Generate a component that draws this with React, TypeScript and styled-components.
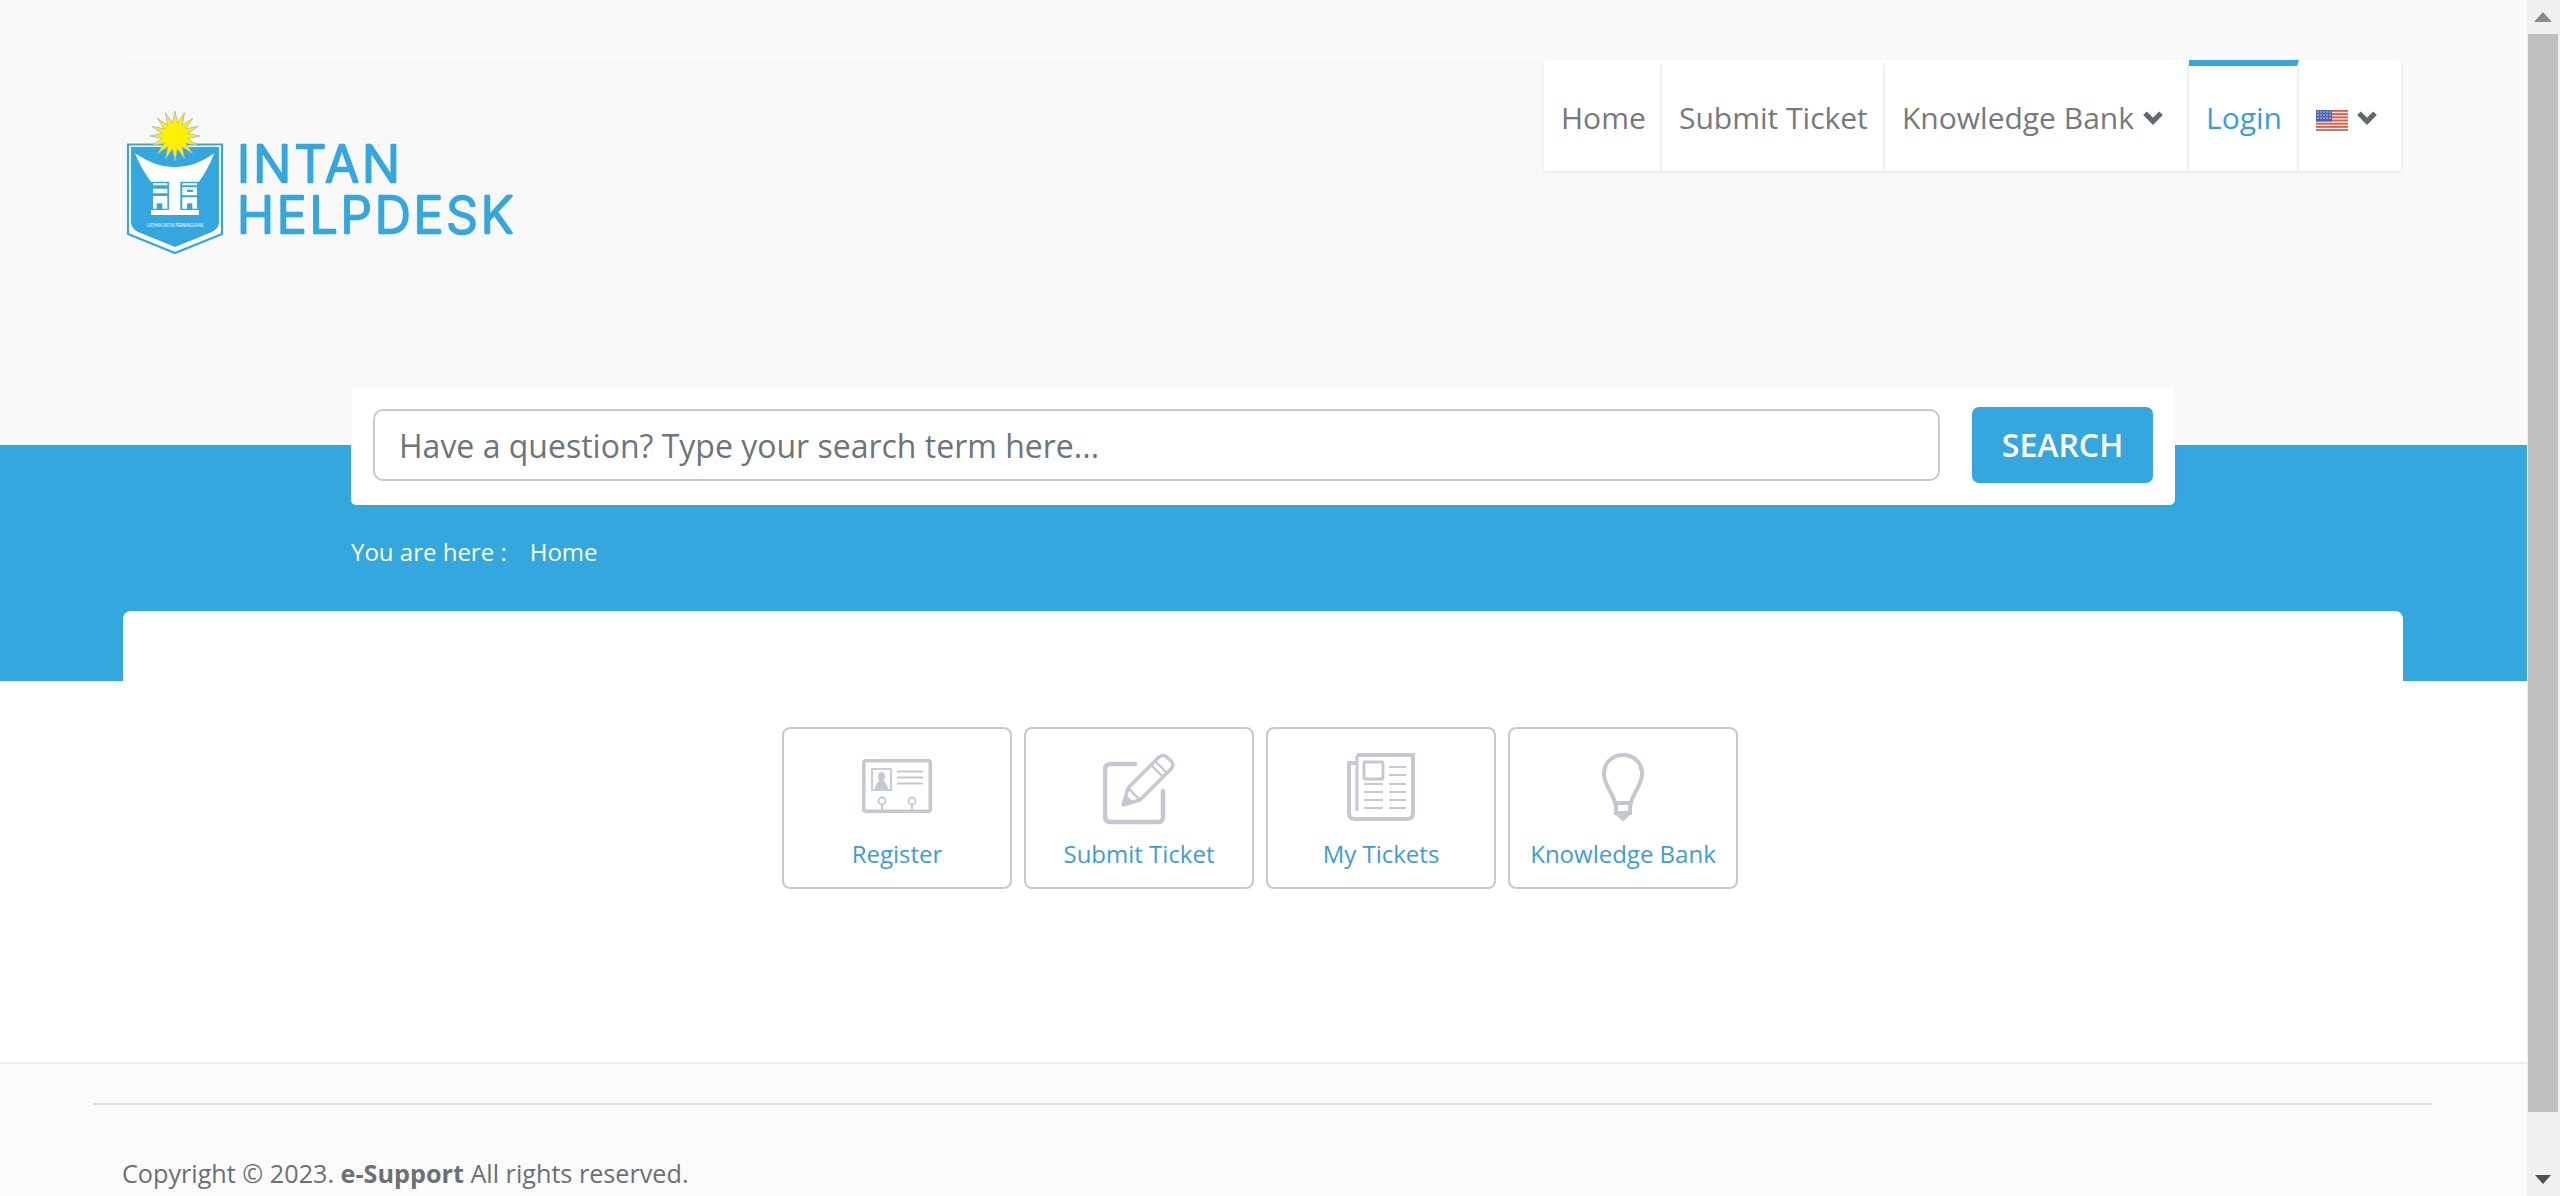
import React from "react";
import styled, { createGlobalStyle } from "styled-components";

const Global = createGlobalStyle`
  html, body { margin: 0; padding: 0; height: 1196px; overflow: hidden; background: #fff; }
  * { box-sizing: border-box; }
  body { font-family: "Open Sans", "Liberation Sans", sans-serif; }
`;

const Shell = styled.div`
  display: flex;
  width: 2560px;
  height: 1196px;
  overflow: hidden;
`;
const Page = styled.div`
  width: 2527px;
  height: 1196px;
  display: flex;
  flex-direction: column;
  overflow: hidden;
`;
const Scrollbar = styled.div`
  width: 33px;
  height: 1196px;
  background: #f0f0f0;
  display: flex;
  flex-direction: column;
  align-items: flex-start;
`;
const ArrowBox = styled.div`
  height: 34px;
  width: 30px;
  margin-left: 1px;
  display: flex;
  align-items: center;
  justify-content: center;
  flex: none;
`;
const Thumb = styled.div`
  width: 30px;
  margin-left: 1px;
  height: 1078px;
  background: #bfbfbf;
`;
const Spacer = styled.div`
  flex: 1;
`;

const HeaderBand = styled.header`
  height: 445px;
  background: #fafafa;
  padding: 60px 122px 0 122px;
  flex: none;
`;
const HeaderInner = styled.div`
  height: 330px;
  background: #f8f8f8;
  display: flex;
  justify-content: space-between;
  align-items: flex-start;
  padding-right: 4px;
`;
const LogoMark = styled.svg`
  display: block;
  margin-top: 45px;
  flex: none;
`;
const Nav = styled.nav`
  display: flex;
  height: 111px;
  background: #fff;
  box-shadow: 0 1px 3px rgba(0, 0, 0, 0.08);
`;
const NavItem = styled.a<{ $active?: boolean; $w: number }>`
  width: ${(p) => p.$w}px;
  display: flex;
  align-items: center;
  gap: 8px;
  padding: 0 0 2px 17px;
  font-size: 30px;
  font-weight: 400;
  color: ${(p) => (p.$active ? "#35a0d8" : "#77787a")};
  border-right: 2px solid #eeeeee;
  border-top: 6px solid ${(p) => (p.$active ? "#35a7df" : "#fff")};
  white-space: nowrap;
  &:last-child { border-right: 0; }
`;
const Chevron = styled.svg`
  display: block;
  flex: none;
`;
const FlagMark = styled.svg`
  display: block;
  flex: none;
  margin-top: 6px;
`;

const BlueBand = styled.section`
  height: 236px;
  background: #35a7df;
  flex: none;
  padding: 0 124px 0 123px;
  display: flex;
  flex-direction: column;
`;
const SearchPanel = styled.div`
  width: 1824px;
  height: 118px;
  margin: -58px 0 0 228px;
  background: #fff;
  border-radius: 5px;
  display: flex;
  align-items: center;
  padding: 0 22px 2px;
  gap: 32px;
  box-shadow: 0 0 3px rgba(0, 0, 0, 0.04);
  flex: none;
`;
const SearchInput = styled.div`
  width: 1567px;
  height: 72px;
  border: 2px solid #c9c9c9;
  border-radius: 10px;
  display: flex;
  align-items: center;
  padding: 0 24px;
  font-size: 32px;
  color: #6c757d;
  white-space: nowrap;
`;
const SearchButton = styled.button`
  width: 181px;
  height: 76px;
  border: 0;
  border-radius: 7px;
  background: #35a7df;
  color: #fff;
  font-family: inherit;
  font-weight: 600;
  font-size: 32px;
  padding: 0 0 2px;
`;
const Crumbs = styled.div`
  margin: 30px 0 0 228px;
  display: flex;
  gap: 23px;
  color: #fdfdf0;
  font-size: 24px;
  line-height: 34px;
`;
const CardTop = styled.div`
  margin-top: auto;
  height: 70px;
  background: #fff;
  border-radius: 8px 8px 0 0;
  flex: none;
`;

const Main = styled.main`
  height: 381px;
  background: #fff;
  flex: none;
  padding: 46px 0 0 782px;
  display: flex;
  gap: 12px;
  align-items: flex-start;
`;
const Tile = styled.a`
  width: 230px;
  height: 162px;
  border: 2px solid #c9c9c9;
  border-radius: 8px;
  display: flex;
  flex-direction: column;
  align-items: center;
  background: #fff;
`;
const IconSlot = styled.div`
  height: 108px;
  padding-top: 24px;
  display: flex;
  align-items: flex-start;
  justify-content: center;
  flex: none;
`;
const TileLabel = styled.span`
  font-size: 24px;
  line-height: 34px;
  color: #3d9dd6;
  white-space: nowrap;
`;

const Footer = styled.footer`
  flex: 1;
  background: #fbfbfb;
  border-top: 2px solid #eeeeee;
  padding-top: 39px;
`;
const FooterRule = styled.hr`
  margin: 0 95px 0 93px;
  border: 0;
  height: 2px;
  background: #dedede;
`;
const Copyright = styled.p`
  margin: 51px 0 0 122px;
  font-size: 25.2px;
  line-height: 34px;
  color: #6b7074;
  white-space: nowrap;
  b { font-weight: 700; }
`;

const ChevronDown = () => (
  <Chevron width={22} height={15} viewBox="0 0 20 14" fill="none">
    <path d="M2.500 3 L10 10.500 L17.500 3" stroke="#5f6870" strokeWidth="4.800" />
  </Chevron>
);

const Flag = () => (
  <FlagMark width="32" height="21" viewBox="0 0 32 21">
    <rect width="32" height="21" fill="#f7e4de" />
    {[0, 3.200, 6.400, 9.600, 12.800, 16, 19.200].map((y) => (
      <rect key={y} y={y} width="32" height="1.800" fill="#db5f4c" />
    ))}
    <rect width="16" height="11.500" fill="#4d62b4" />
    {[2, 5, 8].map((y) =>
      [2, 5, 8, 11, 14].map((x) => <circle key={`${x}-${y}`} cx={x} cy={y} r="0.800" fill="#cfd6ee" />)
    )}
    <rect y="20" width="32" height="1" fill="#a97a70" />
  </FlagMark>
);

const sun = (() => {
  const cx = 53, cy = 31, n = 16;
  const pts: string[] = [];
  for (let i = 0; i < n * 2; i++) {
    const r = i % 2 === 0 ? 25 : 13;
    const a = (Math.PI * i) / n - Math.PI / 2;
    pts.push(`${(cx + r * Math.cos(a)).toFixed(1)},${(cy + r * Math.sin(a)).toFixed(1)}`);
  }
  return pts.join(" ");
})();

const Logo = () => (
  <LogoMark width="410" height="160" viewBox="0 0 410 160" fill="none">
    <path d="M6 39.500 H100 V129 L53 148 L6 129 Z" fill="#fff" stroke="#35a7df" strokeWidth="2.200" />
    <path d="M9 42 H97 V118 Q96 124 90 127 L53 142 L16 127 Q10 124 9 118 Z" fill="#35a7df" />
    <g transform="translate(3 45) scale(0.3333)">
      <path d="M30 10 Q90 52 150 52 Q210 52 268 10 Q248 60 222 95 V195 H78 V95 Q50 60 30 10 Z" fill="#fff" />
      <path d="M78 95 H132 V180 H78 Z M166 95 H222 V180 H166 Z" fill="#35a7df" />
      <path d="M84 100 H127 V106 H84 Z M84 116 H127 V130 H84 Z M84 138 H127 V176 H112 V160 H95 V176 H84 Z" fill="#fff" />
      <path d="M172 100 H216 V106 H172 Z M172 112 H216 V136 H172 Z M172 142 H216 V176 H202 V160 H186 V176 H172 Z" fill="#fff" />
      <rect x="186" y="119" width="18" height="7" fill="#35a7df" />
    </g>
    <text x="53" y="122" textAnchor="middle" textLength="56" lengthAdjust="spacingAndGlyphs" fontFamily="'Liberation Sans', sans-serif" fontSize="5" fill="#fff">LATIHAN UNTUK PEMBANGUNAN</text>
    <polygon points={sun} fill="#fff000" stroke="#9db4cf" strokeWidth="0.800" />
    <text fontFamily="Inter, Lato, sans-serif" fontSize="50" fontWeight="300" fill="#35a7df" stroke="#35a7df" strokeWidth="2.400" strokeLinejoin="round">
      <tspan x="115" y="76.800" textLength="163" lengthAdjust="spacing">INTAN</tspan>
      <tspan x="115" y="127.800" textLength="276" lengthAdjust="spacing">HELPDESK</tspan>
    </text>
  </LogoMark>
);

const stroke = "#c3c8d1";

const IdCardIcon = () => (
  <svg width="70" height="54" viewBox="0 0 70 54" fill="none" stroke={stroke} style={{ marginTop: 6 }}>
    <rect x="1.750" y="1.750" width="66.500" height="50.500" rx="2" strokeWidth="3.500" />
    <rect x="10" y="10" width="19" height="21" strokeWidth="1.800" />
    <ellipse cx="19.500" cy="17.500" rx="3.600" ry="4.600" fill={stroke} stroke="none" />
    <path d="M13 30 C13.500 25 16 24 17.500 21 H21.500 C23 24 25.500 25 26 30 Z" fill={stroke} stroke="none" />
    <path d="M35 12.500 H61 M35 18.500 H61 M35 24.500 H61" strokeWidth="2.200" />
    <circle cx="20" cy="42" r="3.500" strokeWidth="1.800" />
    <circle cx="50" cy="42" r="3.500" strokeWidth="1.800" />
    <path d="M20 46 V52 M50 46 V52" strokeWidth="1.800" />
  </svg>
);
const PencilIcon = () => (
  <svg width="72" height="72" viewBox="0 0 72 72" fill="none" stroke={stroke}>
    <path d="M32 11 H8 Q2 11 2 17 V64 Q2 69 8 69 H55 Q60 69 60 64 V38" strokeWidth="4.500" strokeLinecap="round" />
    <path d="M20 52 L25 35 L56 4 Q60 1 64 4 L69 9 Q71 13 68 16 L37 47 Z" strokeWidth="3.400" strokeLinejoin="round" />
    <path d="M25 35 L37 47 M52 8 L64 20 M48 12 L60 24" strokeWidth="2.400" />
    <path d="M20 52 L23 42 L30 49 Z" fill={stroke} strokeWidth="1" />
  </svg>
);
const NewsIcon = () => (
  <svg width="68" height="68" viewBox="0 0 68 68" fill="none" stroke={stroke}>
    <path d="M10 2 H66 V60 Q66 66 60 66 H8 Q2 66 2 60 V10 H10" strokeWidth="4" />
    <path d="M10 2 V58" strokeWidth="3" />
    <rect x="17" y="9" width="19" height="17" rx="1" strokeWidth="2.800" />
    <path d="M42 14 H59 M42 22 H59 M17 31 H36 M42 31 H59 M17 39 H36 M42 39 H59 M17 47 H36 M42 47 H59 M17 55 H36 M42 55 H59" strokeWidth="2.200" />
  </svg>
);
const BulbIcon = () => (
  <svg width="42" height="68" viewBox="0 0 42 68" fill="none" stroke={stroke} strokeWidth="4">
    <path d="M13 50 C11 40 2 32 2 21 C2 10 10 2 21 2 C32 2 40 10 40 21 C40 32 31 40 29 50 Z" />
    <path d="M13 50 H29 M14 50 V60 H28 V50" />
    <path d="M15 60 L21 66 L27 60" fill={stroke} />
  </svg>
);

const tiles = [
  { label: "Register", icon: <IdCardIcon /> },
  { label: "Submit Ticket", icon: <PencilIcon /> },
  { label: "My Tickets", icon: <NewsIcon /> },
  { label: "Knowledge Bank", icon: <BulbIcon /> },
];

export default function App() {
  return (
    <Shell>
      <Global />
      <Page>
        <HeaderBand>
          <HeaderInner>
            <Logo />
            <Nav>
              <NavItem $w={118}>Home</NavItem>
              <NavItem $w={223}>Submit Ticket</NavItem>
              <NavItem $w={304}>Knowledge Bank<ChevronDown /></NavItem>
              <NavItem $w={110} $active>Login</NavItem>
              <NavItem $w={102}><Flag /><ChevronDown /></NavItem>
            </Nav>
          </HeaderInner>
        </HeaderBand>
        <BlueBand>
          <SearchPanel>
            <SearchInput>Have a question? Type your search term here...</SearchInput>
            <SearchButton>SEARCH</SearchButton>
          </SearchPanel>
          <Crumbs>
            <span>You are here :</span>
            <span>Home</span>
          </Crumbs>
          <CardTop />
        </BlueBand>
        <Main>
          {tiles.map((t) => (
            <Tile key={t.label}>
              <IconSlot>{t.icon}</IconSlot>
              <TileLabel>{t.label}</TileLabel>
            </Tile>
          ))}
        </Main>
        <Footer>
          <FooterRule />
          <Copyright>Copyright © 2023. <b>e-Support</b> All rights reserved.</Copyright>
        </Footer>
      </Page>
      <Scrollbar>
        <ArrowBox>
          <svg width="18" height="10" viewBox="0 0 18 10"><path d="M0 10 L9 0 L18 10 Z" fill="#8a8a8a" /></svg>
        </ArrowBox>
        <Thumb />
        <Spacer />
        <ArrowBox>
          <svg width="16" height="9" viewBox="0 0 16 9"><path d="M0 0 H16 L8 9 Z" fill="#505050" /></svg>
        </ArrowBox>
      </Scrollbar>
    </Shell>
  );
}
